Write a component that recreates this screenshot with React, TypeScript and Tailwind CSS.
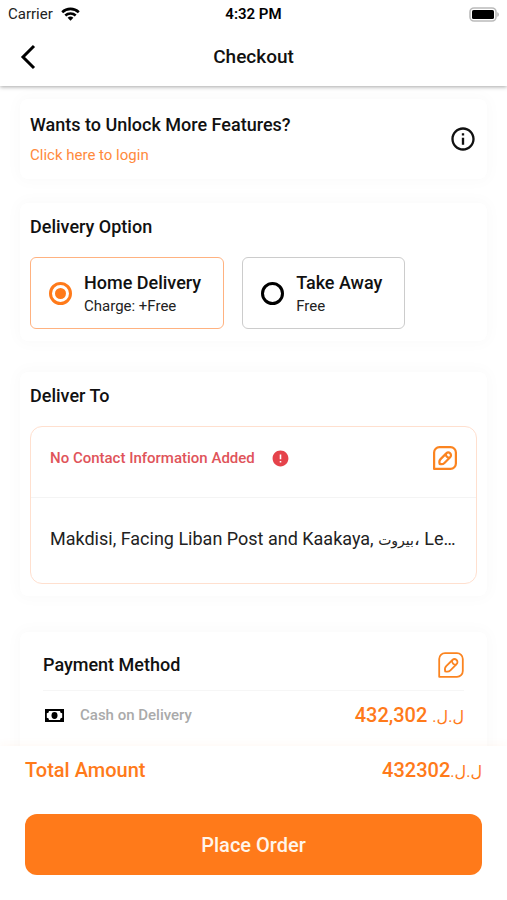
import { useState } from 'react';
import type { ReactNode } from 'react';
import { MdInfoOutline, MdError } from 'react-icons/md';

function StatusBar() {
  return (
    <div className="grid grid-cols-3 items-center h-7 px-2 text-[15px] text-[#222]">
      <div className="flex items-center gap-2">
        <span>Carrier</span>
        <svg width="19" height="14" viewBox="0 0 19 14" fill="none" stroke="#000" strokeWidth="2.6" aria-hidden="true">
          <path d="M1.2 5.2a12 12 0 0 1 16.6 0" />
          <path d="M4.3 8.5a7.6 7.6 0 0 1 10.4 0" />
          <path d="M9.5 13.8 6.6 10.8a4.2 4.2 0 0 1 5.8 0z" fill="#000" stroke="none" />
        </svg>
      </div>
      <span className="text-center font-semibold text-black">4:32 PM</span>
      <svg className="justify-self-end" width="31" height="15" viewBox="0 0 31 15" aria-hidden="true">
        <rect x="2" y="1" width="26" height="13" rx="4" fill="#fff" stroke="#bbb" strokeWidth="1.6" />
        <rect x="4" y="3" width="22" height="9" rx="1.6" fill="#000" />
        <path d="M29.4 5.2c1.8.6 1.8 4 0 4.600z" fill="#aaa" />
      </svg>
    </div>
  );
}

function EditIcon({ size, stroke }: { size: number; stroke: number }) {
  return (
    <svg width={size} height={size} viewBox="0 0 26 26" fill="none" stroke="#fb8420" strokeWidth={stroke} strokeLinejoin="round" aria-hidden="true">
      <path d="M1.2 24.8V7A5.8 5.8 0 0 1 7 1.2h12A5.8 5.8 0 0 1 24.8 7v12a5.8 5.8 0 0 1-5.8 5.8z" />
      <path d="M7.2 19.400c-.7-2.400-.2-4 1-5.200l6.200-6.200a2.900 2.900 0 0 1 4.200 4.200l-6.200 6.200c-1.200 1.200-2.800 1.700-5.200 1z" />
      <path d="M14 8.400c-.5 2.300 1.900 4.700 4.200 4.200" />
    </svg>
  );
}

function Card({ className, children }: { className: string; children: ReactNode }) {
  return (
    <section className={`mx-5 bg-white rounded-lg shadow-[0_0_14px_4px_rgba(0,0,0,0.02)] ${className}`}>
      {children}
    </section>
  );
}

const options = [
  { id: 'home', title: 'Home Delivery', note: 'Charge: +Free' },
  { id: 'take', title: 'Take Away', note: 'Free' },
];

export default function App() {
  const [option, setOption] = useState('home');

  return (
    <div className="h-dvh flex flex-col bg-white text-[#111] font-[Roboto,'DejaVu_Sans',sans-serif]">
      <header className="relative z-10 shrink-0 bg-white shadow-[0_1px_4px_rgba(0,0,0,0.35)]">
        <StatusBar />
        <div className="grid grid-cols-[40px_1fr_40px] items-center h-[58px] px-2">
          <button type="button" aria-label="Back" className="flex justify-center">
            <svg width="16" height="26" viewBox="0 0 16 26" fill="none" stroke="#000" strokeWidth="3" aria-hidden="true">
              <path d="M14 2 3 13l11 11" />
            </svg>
          </button>
          <h1 className="text-center text-[19px] font-medium">Checkout</h1>
        </div>
      </header>

      <main className="flex-1 min-h-0 overflow-y-auto [scrollbar-width:none]">
        <Card className="mt-[13px] h-20 px-2.5 flex items-center justify-between">
          <div className="flex flex-col items-start gap-2">
            <h2 className="text-[18px] leading-6 font-medium">Wants to Unlock More Features?</h2>
            <a href="#login" className="text-[15px] leading-5 text-[#ff8a3c]">Click here to login</a>
          </div>
          <button type="button" aria-label="More information">
            <MdInfoOutline size={28} color="#111" />
          </button>
        </Card>

        <Card className="mt-6 pt-3 px-2.5 pb-3">
          <h2 className="text-[18px] leading-6 font-medium">Delivery Option</h2>
          <div className="mt-[18px] flex gap-[18px]">
            {options.map((o) => (
              <label
                key={o.id}
                className={`flex items-center gap-3 h-[72px] pl-[18px] pr-[22px] pt-px border rounded-md ${
                  option === o.id ? 'border-[#ffb280]' : 'border-[#ccc]'
                }`}
              >
                <input
                  type="radio"
                  name="delivery"
                  checked={option === o.id}
                  onChange={() => setOption(o.id)}
                  className="appearance-none size-[23px] shrink-0 rounded-full border-[3px] border-black checked:border-[#ff7a1a] checked:bg-[#ff7a1a] checked:bg-clip-content checked:p-[3px]"
                />
                <span className="flex flex-col">
                  <span className="text-[18px] leading-6 font-medium">{o.title}</span>
                  <span className="text-[15px] leading-[22px] text-[#222]">{o.note}</span>
                </span>
              </label>
            ))}
          </div>
        </Card>

        <Card className="mt-[31px] pt-3 px-2.5 pb-3">
          <h2 className="text-[18px] leading-6 font-medium">Deliver To</h2>
          <div className="mt-[18px] border border-[#ffe0cf] rounded-xl">
            <div className="flex items-center h-[71px] px-[19px] pb-2 border-b border-[#f4f4f4]">
              <span className="text-[15px] font-medium text-[#e0545a]">No Contact Information Added</span>
              <MdError size={19} color="#e5434b" className="ml-4" />
              <button type="button" aria-label="Edit contact" className="ml-auto">
                <EditIcon size={24} stroke={2.4} />
              </button>
            </div>
            <div className="flex items-center h-[85px] px-[19px] pb-1">
              <p className="whitespace-nowrap text-[18px] text-[#222]">
                Makdisi, Facing Liban Post and Kaakaya, <span className="text-sm">بيروت</span>، Le…
              </p>
            </div>
          </div>
        </Card>

        <Card className="mt-9 pt-5 px-[23px] pb-6">
          <div className="flex items-center justify-between pb-3 border-b border-[#f6f6f6]">
            <h2 className="text-[18px] leading-6 font-medium">Payment Method</h2>
            <button type="button" aria-label="Edit payment method">
              <EditIcon size={26} stroke={1.8} />
            </button>
          </div>
          <div className="flex items-center h-12">
            <svg width="19" height="13" viewBox="0 0 19 13" className="ml-0.5" aria-hidden="true">
              <path fill="#000" d="M0 0h19v13H0z" />
              <path fill="#fff" d="M4 2h11a2.300 2.300 0 0 0 2.200 2.300v4.400A2.300 2.300 0 0 0 15 11H4a2.300 2.300 0 0 0-2.200-2.300V4.300A2.300 2.300 0 0 0 4 2z" />
              <ellipse cx="9.500" cy="6.500" rx="3" ry="3.400" fill="#000" />
            </svg>
            <span className="ml-4 text-[15px] font-medium text-[#aaa]">Cash on Delivery</span>
            <span dir="rtl" className="ml-auto text-[20px] font-medium text-[#ff7a1a]">
              <span className="text-base font-normal">ل.ل.</span> 432,302
            </span>
          </div>
        </Card>
      </main>

      <footer className="relative z-10 shrink-0 bg-white px-[25px] pt-2.5 pb-[25px] shadow-[0_-2px_8px_rgba(255,140,60,0.05)]">
        <div className="flex items-center justify-between h-7 text-[20px] font-medium text-[#ff7a1a]">
          <span>Total Amount</span>
          <span dir="rtl">
            <span className="text-base font-normal">ل.ل.</span>432302
          </span>
        </div>
        <button type="button" className="mt-[30px] w-full h-[61px] rounded-xl bg-[#ff7a1a] text-[20px] font-medium text-[#fff5ea]">
          Place Order
        </button>
      </footer>
    </div>
  );
}
